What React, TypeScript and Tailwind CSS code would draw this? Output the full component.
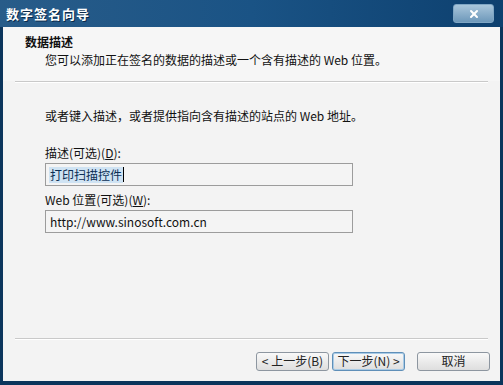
import { X } from 'lucide-react';

const cjk = { fontFamily: '"Noto Sans CJK SC", "Liberation Sans", sans-serif' };

function Separator() {
  return (
    <div className="mx-[12px] flex flex-col">
      <div className="h-px bg-[#c9c9c9]" />
      <div className="h-px bg-white" />
    </div>
  );
}

function WizButton({ label, primary }: { label: string; primary?: boolean }) {
  return (
    <button
      className={
        'h-[19px] w-[73px] rounded-[3px] border text-[12px] leading-none text-[#222] bg-gradient-to-b from-[#f9f9f9] to-[#dedede] ' +
        (primary ? 'border-[#5f8fb8] shadow-[inset_0_0_0_1px_#a9cbe6]' : 'border-[#8d96a0]')
      }
    >
      {label}
    </button>
  );
}

export default function App() {
  return (
    <div className="w-[503px] h-[385px] flex flex-col bg-[#0b355c]" style={cjk}>
      <div className="h-[27px] flex items-center justify-between pl-[6px] pr-[9px] bg-gradient-to-r from-[#285c89] via-[#1a5385] to-[#0d406f]">
        <span className="text-[13px] font-bold text-white tracking-[1px] [text-shadow:1px_1px_0_#0a2a4a]">数字签名向导</span>
        <div className="w-[41px] h-[19px] rounded-[3px] border border-[#7fa6c4] bg-gradient-to-b from-[#a9c6db] to-[#6d98ba] flex items-center justify-center">
          <X className="w-[12px] h-[12px] text-white" strokeWidth={4} />
        </div>
      </div>
      <div className="flex-1 mx-[3px] mb-[4px] flex flex-col bg-[#f3f3f3] text-[12px] text-[#111]">
        <div className="h-[54px] bg-[#f6f6f6] pt-[8px] pl-[22px] flex flex-col gap-[4px]">
          <div className="font-bold leading-[14px]">数据描述</div>
          <div className="pl-[20px] leading-[14px]">您可以添加正在签名的数据的描述或一个含有描述的 Web 位置。</div>
        </div>
        <Separator />
        <div className="flex-1 pl-[42px] pt-[26px] flex flex-col">
          <div className="leading-[14px]">或者键入描述，或者提供指向含有描述的站点的 Web 地址。</div>
          <div className="mt-[23px] leading-[14px]">
            描述(可选)(<span className="underline">D</span>):
          </div>
          <div className="mt-[3px] w-[308px] h-[23px] border border-[#9c9c9c] bg-[#f4f4f4] flex items-center pl-[3px]">
            <span className="bg-[#cfe3f3] text-[#0c2f55] leading-[16px] px-[1px]">打印扫描控件</span>
            <span className="w-px h-[15px] bg-black" />
          </div>
          <div className="mt-[7px] leading-[14px]">
            Web 位置(可选)(<span className="underline">W</span>):
          </div>
          <div className="mt-[3px] w-[308px] h-[23px] border border-[#9c9c9c] bg-[#f4f4f4] flex items-center pl-[4px]">
            http://www.sinosoft.com.cn
          </div>
        </div>
        <Separator />
        <div className="h-[41px] flex items-center justify-end pr-[10px] pt-[1px]">
          <div className="flex gap-[3px]">
            <WizButton label="< 上一步(B)" />
            <WizButton label="下一步(N) >" primary />
          </div>
          <div className="ml-[12px]">
            <WizButton label="取消" />
          </div>
        </div>
      </div>
    </div>
  );
}
